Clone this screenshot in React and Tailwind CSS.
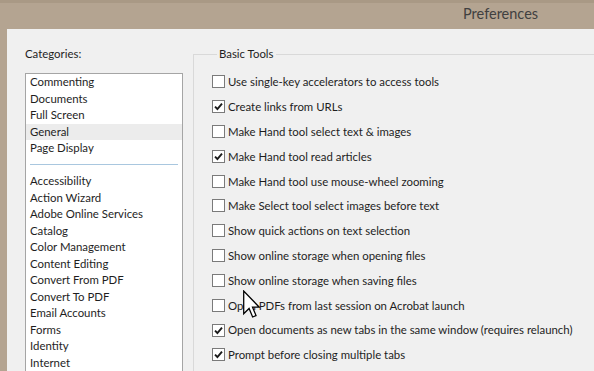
import React from "react";

const cats1 = ["Commenting", "Documents", "Full Screen", "General", "Page Display"];
const cats2 = [
  "Accessibility",
  "Action Wizard",
  "Adobe Online Services",
  "Catalog",
  "Color Management",
  "Content Editing",
  "Convert From PDF",
  "Convert To PDF",
  "Email Accounts",
  "Forms",
  "Identity",
  "Internet",
];

const opts = [
  ["Use single-key accelerators to access tools", false],
  ["Create links from URLs", true],
  ["Make Hand tool select text & images", false],
  ["Make Hand tool read articles", true],
  ["Make Hand tool use mouse-wheel zooming", false],
  ["Make Select tool select images before text", false],
  ["Show quick actions on text selection", false],
  ["Show online storage when opening files", false],
  ["Show online storage when saving files", false],
  ["Open PDFs from last session on Acrobat launch", false],
  ["Open documents as new tabs in the same window (requires relaunch)", true],
  ["Prompt before closing multiple tabs", true],
];

function Box({ checked }) {
  return (
    <div className="w-[13px] h-[13px] shrink-0 border border-[#7a7a7a] bg-white flex items-center justify-center">
      {checked && (
        <svg width="9" height="9" viewBox="0 0 9 9">
          <path d="M1 4.6 L3.4 7 L8 1.6" fill="none" stroke="#1a1a1a" strokeWidth="1.9" />
        </svg>
      )}
    </div>
  );
}

export default function App() {
  return (
    <div
      className="relative w-[594px] h-[371px] overflow-hidden bg-[#b4a491] flex flex-col text-[#1e1e1e]"
      style={{ fontFamily: 'Lato, "Noto Sans", sans-serif' }}
    >
      <div className="h-[29px] shrink-0 border-t-[3px] border-[#a99985] flex items-center pl-[463px]">
        <span className="text-[14.5px] text-[#404040] leading-none -mt-[3px]">Preferences</span>
      </div>
      <div className="flex-1 ml-[7px] bg-[#f0f0f0] flex">
        <div className="w-[186px] shrink-0 pl-[18px] pt-[17px]">
          <div className="text-[11.4px] leading-[16px] h-[16px]">Categories:</div>
          <div className="mt-[11px] w-[158px] h-[400px] border border-[#a5a5a5] bg-white">
            {cats1.map((c) => (
              <div
                key={c}
                className={`h-[16.5px] leading-[16.5px] text-[11.4px] pl-[4px] whitespace-nowrap ${
                  c === "General" ? "bg-[#ececec]" : ""
                }`}
              >
                {c}
              </div>
            ))}
            <div className="h-[16.5px] flex items-center px-[4px]">
              <div className="w-full h-px bg-[#a9c7df]" />
            </div>
            {cats2.map((c) => (
              <div key={c} className="h-[16.5px] leading-[16.5px] text-[11.4px] pl-[4px] whitespace-nowrap">
                {c}
              </div>
            ))}
          </div>
        </div>
        <fieldset className="flex-1 mt-[17px] border-l border-t border-[#d9d9d9] border-r-0 border-b-0 min-w-0 pl-[18px]">
          <legend className="ml-[5px] px-[2px] text-[11.4px] leading-[16px]">Basic Tools</legend>
          <div className="pt-[7.5px]">
            {opts.map(([t, c]) => (
              <div key={t} className="h-[24.82px] flex items-center gap-[3px] whitespace-nowrap text-[11.4px]">
                <Box checked={c} />
                <span>{t}</span>
              </div>
            ))}
          </div>
        </fieldset>
      </div>
      <svg
        className="absolute left-[243px] top-[290px]"
        width="17"
        height="29"
        viewBox="0 0 12 20"
      >
        <path
          d="M0.5 0.5 L0.5 16.5 L4.3 12.8 L6.8 18.8 L9.2 17.8 L6.7 11.9 L11.5 11.9 Z"
          fill="#ffffff"
          stroke="#000000"
          strokeWidth="0.9"
          strokeLinejoin="miter"
        />
      </svg>
    </div>
  );
}
